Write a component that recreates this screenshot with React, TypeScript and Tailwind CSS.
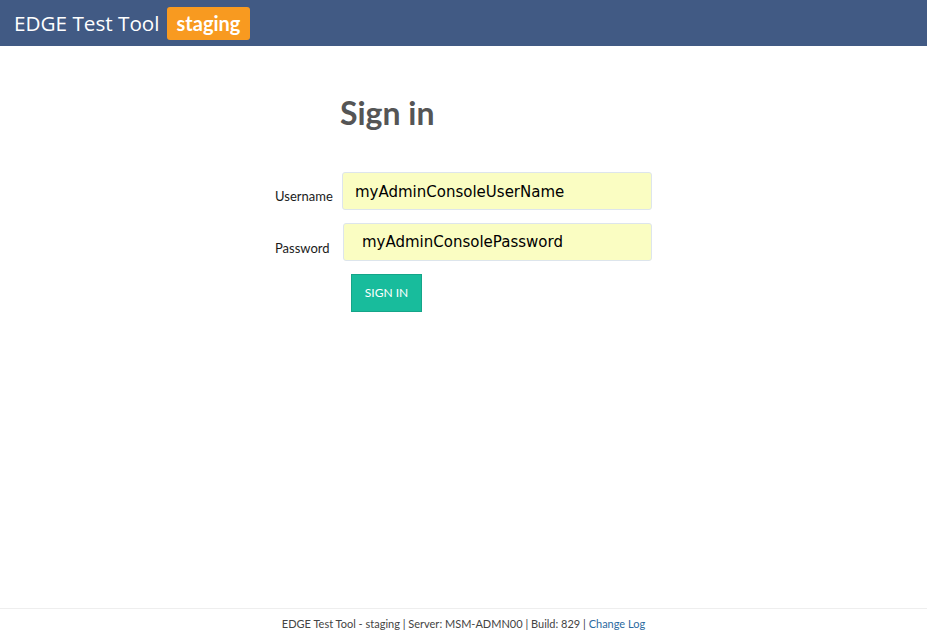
import React from 'react';

const sans = "font-['Lato','Liberation_Sans',sans-serif]";

export default function App() {
  return (
    <div className={`min-h-screen flex flex-col bg-white text-[#333] ${sans}`}>
      {/* Top bar */}
      <header className="h-[46px] bg-[#415a84] flex items-center px-[14px] gap-[7px]">
        <span className="text-white text-[20.7px] leading-none font-['Open_Sans',sans-serif]">EDGE Test Tool</span>
        <span className="bg-[#f89a20] text-white font-bold text-[20px] leading-none rounded-[3px] px-[10px] pt-[6px] pb-[7px]">
          staging
        </span>
      </header>

      {/* Sign in form */}
      <main className="flex-1">
        <div className="w-[377px] mx-auto pt-[48px]">
          <h1 className="ml-[65px] text-[32px] font-bold text-[#555] leading-[38px]">Sign in</h1>

          <form className="mt-[40px] flex flex-col" onSubmit={(e) => e.preventDefault()}>
            <div className="flex items-start">
              <label className="w-[67px] pt-[15px] text-[13px] text-[#1a1a1a]">Username</label>
              <input
                className="w-[310px] h-[38px] bg-[#fafdc2] border border-[#dde5ec] rounded-[3px] pl-[12px] pt-[2px] text-[15px] text-black font-['DejaVu_Sans',sans-serif] outline-none"
                defaultValue="myAdminConsoleUserName"
              />
            </div>
            <div className="flex items-start mt-[13px]">
              <label className="w-[68px] pt-[16px] text-[13px] text-[#1a1a1a]">Password</label>
              <input
                className="w-[309px] h-[38px] bg-[#fafdc2] border border-[#dde5ec] rounded-[3px] pl-[18px] text-[15px] text-black font-['DejaVu_Sans',sans-serif] outline-none"
                defaultValue="myAdminConsolePassword"
              />
            </div>
            <div className="mt-[13px] pl-[76px]">
              <button
                type="submit"
                className="w-[71px] h-[38px] bg-[#18bc9c] border border-[#15a589] text-white text-[12px] uppercase"
              >
                Sign in
              </button>
            </div>
          </form>
        </div>
      </main>

      {/* Footer */}
      <footer className="h-[30px] border-t border-[#eeeeee] flex items-center justify-center pt-[2px] text-[11px] text-[#444]">
        <span>
          EDGE Test Tool - staging | Server: MSM-ADMN00 | Build: 829 |{' '}
          <a href="#" className="text-[#2c6aa0]">Change Log</a>
        </span>
      </footer>
    </div>
  );
}
